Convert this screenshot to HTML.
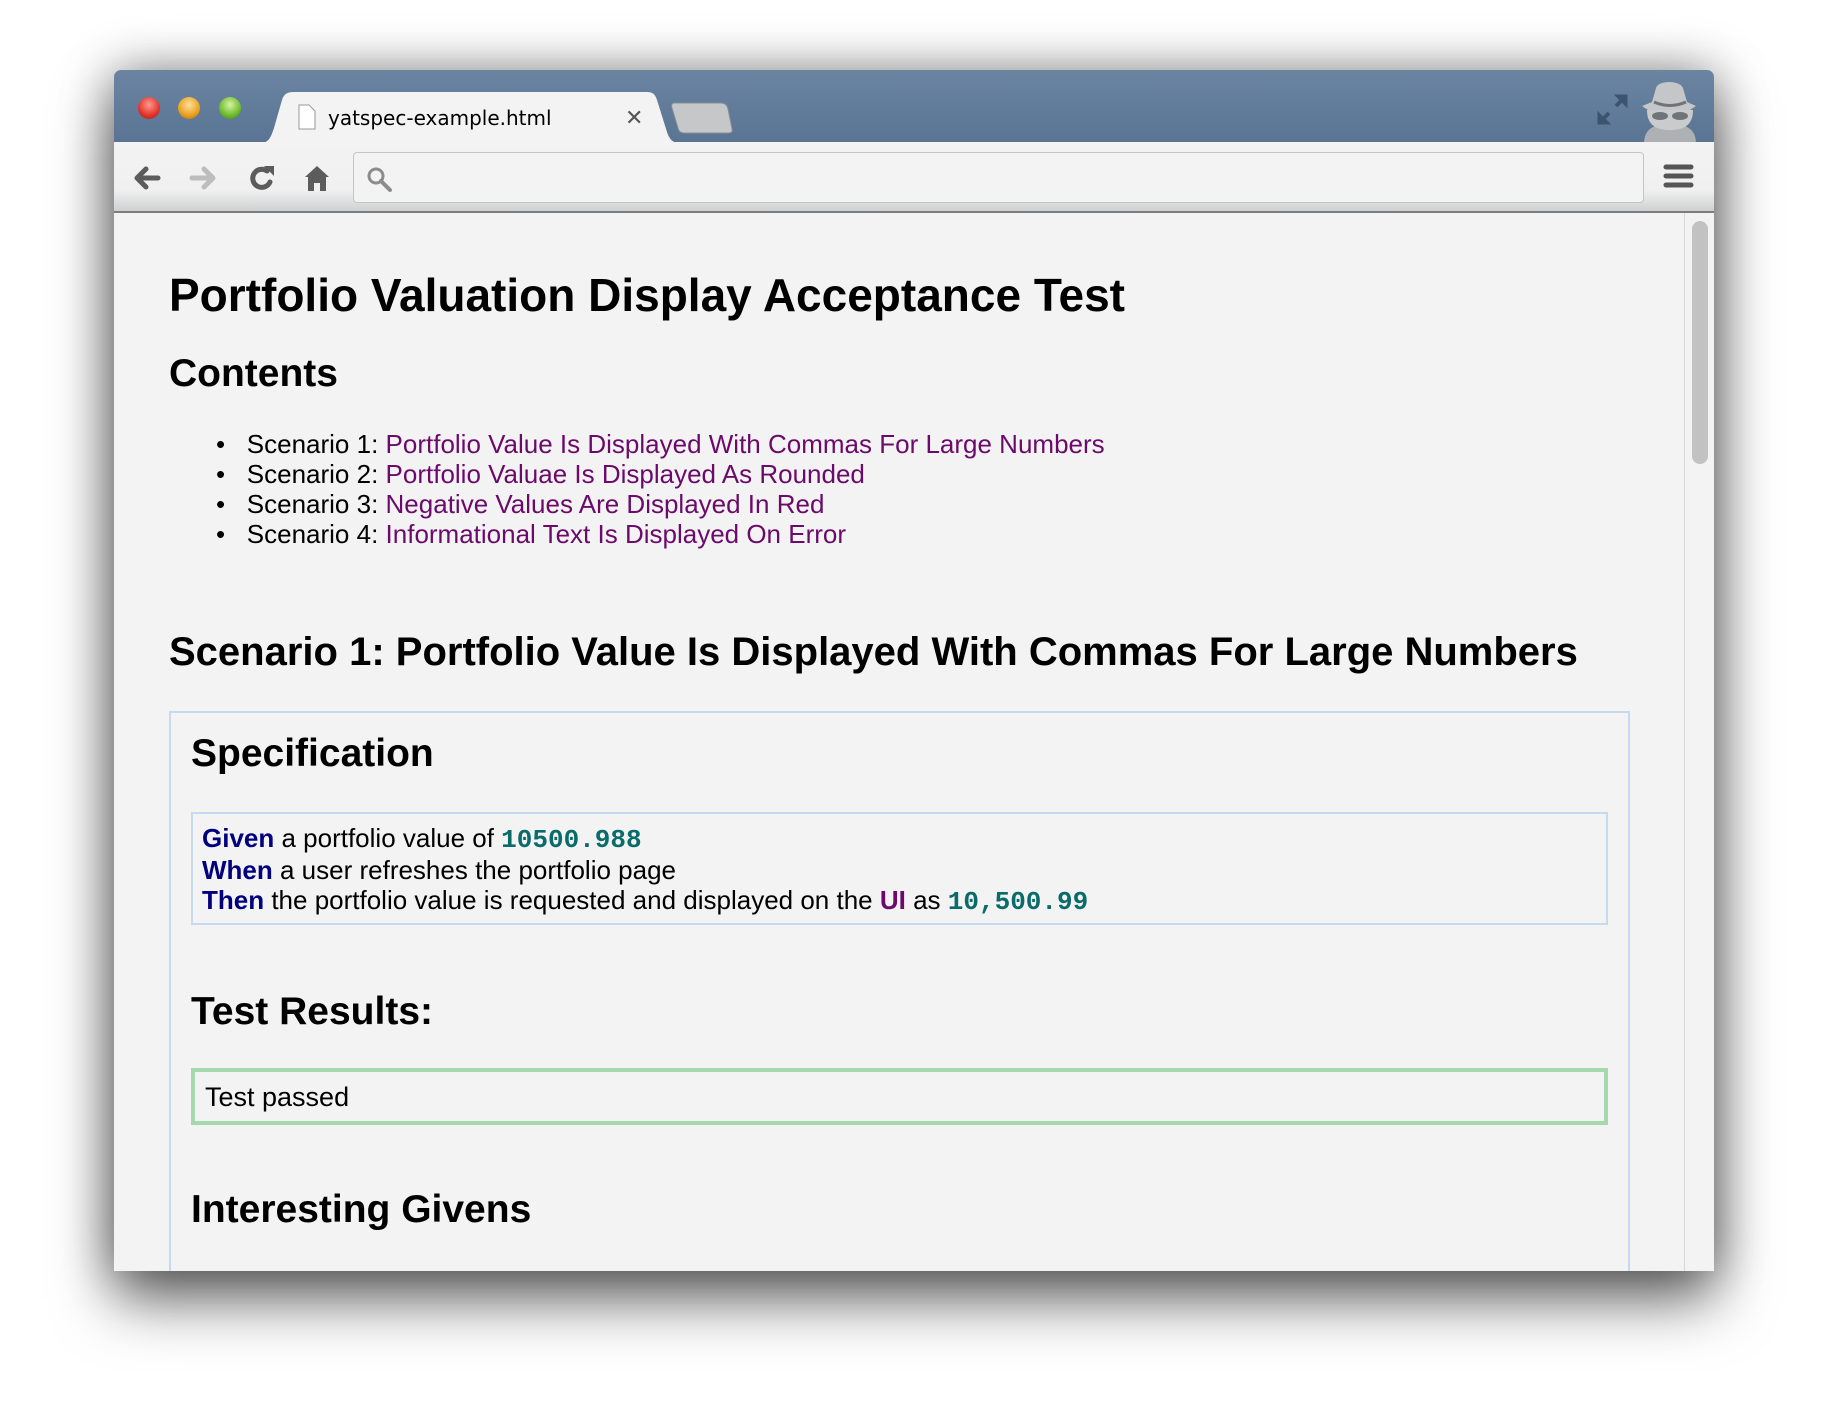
<!DOCTYPE html>
<html><head><meta charset="utf-8"><style>
*{margin:0;padding:0;box-sizing:border-box}
html,body{width:1828px;height:1428px;background:#fff;overflow:hidden;font-family:"Liberation Sans",Arial,sans-serif}
.win{position:absolute;left:114px;top:70px;width:1600px;height:1201px;border-radius:7px 7px 0 0;overflow:hidden;box-shadow:0 30px 60px rgba(0,0,0,.55),0 0 50px rgba(0,0,0,.4)}
.tabbar{position:absolute;left:0;top:0;width:1600px;height:72px;background:linear-gradient(#6a84a2,#5a7493)}
.tool{position:absolute;left:0;top:72px;width:1600px;height:71px;background:linear-gradient(#f3f3f3 0,#f0f0f0 70%,#cfd0d1 100%);border-bottom:2px solid #7d7d7d}
.content{position:absolute;left:0;top:143px;width:1600px;height:1058px;background:#f3f3f3}
.dot{position:absolute;width:22px;height:22px;border-radius:50%;top:27px}
.t{position:absolute;white-space:nowrap;color:#000}
.h{font-weight:bold}
a{color:#6b0a6b;text-decoration:none}
.kw{color:#00007f;font-weight:bold}
.num{color:#0a6b6b;font-weight:bold;font-family:"Liberation Mono",monospace}
</style></head><body>
<div class="win">
 <div class="tabbar"></div>
 <div class="dot" style="left:24px;background:radial-gradient(circle at 50% 35%,#ff9a90,#e0342b 60%,#a61a14)"></div>
 <div class="dot" style="left:64px;background:radial-gradient(circle at 50% 35%,#ffe09a,#e9a020 60%,#a86a0c)"></div>
 <div class="dot" style="left:105px;background:radial-gradient(circle at 50% 35%,#d6f5a0,#6dbb2f 60%,#3f7f17)"></div>
 <svg style="position:absolute;left:140px;top:22px" width="440" height="52"><path d="M0 52 C14 52 16 48 20 36 L28 8 C30 2 33 0 40 0 L392 0 C399 0 401 2 403 8 L413 40 C416 49 420 52 432 52 Z" fill="#f3f3f3"/></svg>
 <svg style="position:absolute;left:554px;top:32px" width="66" height="34"><path d="M6 1 L52 1 C57 1 59 3 60 7 L64 27 C65 30 63 31 60 31 L18 31 C13 31 11 30 10 26 L4 6 C3 3 4 1 6 1Z" fill="#c6c7c8" stroke="#8a8f96"/></svg>
 <svg style="position:absolute;left:182px;top:33px" width="22" height="28"><path d="M3 2 H13 L19 8 V26 H3 Z" fill="#fff" stroke="#999"/></svg>
 <div class="t" style="left:214px;top:34px;line-height:28px;font-family:'DejaVu Sans',sans-serif;font-size:20px">yatspec-example.html</div>
 <div class="t" style="left:511px;top:35px;font-size:22px;line-height:26px;color:#555">✕</div>
 <svg style="position:absolute;left:1480px;top:22px" width="36" height="36"><g stroke="#3c5470" stroke-width="4" fill="#3c5470"><path d="M6 30 L15 21 M22 14 L31 5"/><path d="M4 20 V32 H16 Z M33 3 V15 L21 3 Z" stroke-width="1"/></g></svg>
 <svg style="position:absolute;left:1518px;top:8px" width="80" height="66"><path d="M12 66 C12 52 20 46 38 46 C56 46 64 52 64 66Z" fill="#aeb1b4"/><path d="M24 10 C26 2 48 2 51 10 L55 24 L64 28 L58 32 L16 32 L10 28 L20 24Z" fill="#c4c6c8"/><path d="M15 32 L61 32 C61 47 52 52 38 52 C24 52 15 47 15 32Z" fill="#c9cbcd"/><ellipse cx="28" cy="38" rx="8" ry="4" fill="#6f7478"/><ellipse cx="48" cy="38" rx="8" ry="4" fill="#6f7478"/><path d="M22 24 Q38 31 54 24" stroke="#6f7478" stroke-width="3" fill="none"/></svg>
 <div class="tool"></div>
 <svg style="position:absolute;left:18px;top:94px" width="200" height="30"><g fill="none" stroke-linecap="round" stroke-linejoin="round" stroke-width="5"><path d="M26 14 H6 M14 5 L5 14 L14 23" stroke="#5c5c5c"/><path d="M60 14 H80 M72 5 L81 14 L72 23" stroke="#bdbdbd"/><path d="M135 7 A9 9 0 1 0 138 18" stroke="#5c5c5c"/></g><path d="M132 2 L142 2 L142 12Z" fill="#5c5c5c"/><path d="M173 13 L185 2 L197 13 L194 13 L194 27 L188 27 L188 19 L182 19 L182 27 L176 27 L176 13Z" fill="#5c5c5c"/></svg>
 <div style="position:absolute;left:239px;top:82px;width:1291px;height:51px;border:1px solid #c4c4c4;border-radius:4px;background:#f3f3f3"></div>
 <svg style="position:absolute;left:252px;top:96px" width="28" height="28"><circle cx="10" cy="10" r="7" fill="none" stroke="#8c8c8c" stroke-width="3"/><path d="M15 15 L24 24" stroke="#8c8c8c" stroke-width="4" stroke-linecap="round"/></svg>
 <svg style="position:absolute;left:1549px;top:92px" width="32" height="30"><g stroke="#555" stroke-width="5" stroke-linecap="round"><path d="M3 5 H28 M3 14 H28 M3 23 H28"/></g></svg>
 <div class="content">
  <div style="position:absolute;left:1570px;top:0;width:30px;height:1058px;border-left:1px solid #d8d8d8;background:#f3f3f3"></div>
  <div style="position:absolute;left:1578px;top:8px;width:16px;height:243px;border-radius:8px;background:#c2c2c2"></div>
 </div>
 <div style="position:absolute;left:0;top:143px;width:1570px;height:1058px">
  <div class="t h" style="left:55px;top:59px;font-size:46px;line-height:46px">Portfolio Valuation Display Acceptance Test</div>
  <div class="t h" style="left:55px;top:141px;font-size:39px;line-height:39px">Contents</div>
  <div class="t" style="left:102px;top:216px;font-size:26px;line-height:30px">
   <div>•&nbsp;&nbsp;&nbsp;Scenario 1: <a>Portfolio Value Is Displayed With Commas For Large Numbers</a></div>
   <div>•&nbsp;&nbsp;&nbsp;Scenario 2: <a>Portfolio Valuae Is Displayed As Rounded</a></div>
   <div>•&nbsp;&nbsp;&nbsp;Scenario 3: <a>Negative Values Are Displayed In Red</a></div>
   <div>•&nbsp;&nbsp;&nbsp;Scenario 4: <a>Informational Text Is Displayed On Error</a></div>
  </div>
  <div class="t h" style="left:55px;top:419px;font-size:40px;line-height:40px">Scenario 1: Portfolio Value Is Displayed With Commas For Large Numbers</div>
  <div style="position:absolute;left:55px;top:498px;width:1461px;height:600px;border:2px solid #c6d9ee"></div>
  <div class="t h" style="left:77px;top:521px;font-size:39px;line-height:39px">Specification</div>
  <div style="position:absolute;left:77px;top:599px;width:1417px;height:113px;border:2px solid #c6d9ee"></div>
  <div class="t" style="left:88px;top:610px;font-size:26px;line-height:30px">
   <div><span class="kw">Given</span> a portfolio value of <span class="num">10500.988</span></div>
   <div><span class="kw">When</span> a user refreshes the portfolio page</div>
   <div><span class="kw">Then</span> the portfolio value is requested and displayed on the <b style="color:#6b0a6b">UI</b> as <span class="num">10,500.99</span></div>
  </div>
  <div class="t h" style="left:77px;top:779px;font-size:39px;line-height:39px">Test Results:</div>
  <div style="position:absolute;left:77px;top:855px;width:1417px;height:57px;border:4px solid #a6d8ad"></div>
  <div class="t" style="left:91px;top:871px;font-size:27px;line-height:27px">Test passed</div>
  <div class="t h" style="left:77px;top:977px;font-size:39px;line-height:39px">Interesting Givens</div>
 </div>
</div>
</body></html>
